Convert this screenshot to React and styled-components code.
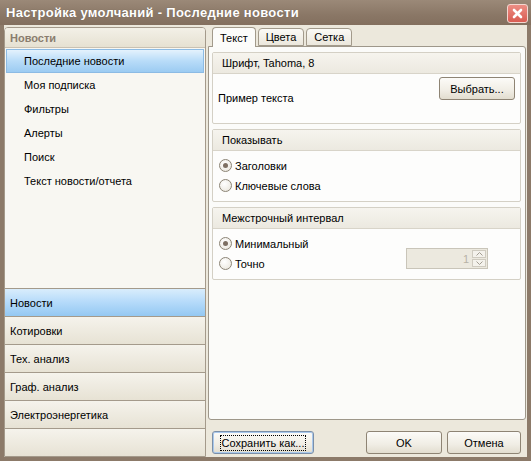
import React from "react"
import styled, { createGlobalStyle } from "styled-components"

const Global = createGlobalStyle`
    html, body {
        margin: 0;
        padding: 0;
        background: #ffffff;
    }
    * {
        box-sizing: border-box;
    }
`

const Window = styled.div`
    width: 531px;
    height: 461px;
    display: flex;
    flex-direction: column;
    font-family: "Liberation Sans", Arial, sans-serif;
    font-size: 11px;
    color: #000;
    background: #8c7a69;
`

const TitleBar = styled.div`
    height: 25px;
    display: flex;
    align-items: center;
    justify-content: space-between;
    padding: 0 3px 0 6px;
    background: linear-gradient(#9b8978, #8a7766 60%, #836f5e);
`

const Title = styled.div`
    color: #fff;
    font-weight: bold;
    font-size: 13px;
    letter-spacing: 0.3px;
    text-shadow: 0 0 1px rgba(0, 0, 0, 0.25);
`

const CloseButton = styled.div`
    width: 21px;
    height: 19px;
    border-radius: 3px;
    border: 1px solid #f3d7d0;
    background: linear-gradient(#ec8e84, #d95c52);
    display: flex;
    align-items: center;
    justify-content: center;
    margin-top: 1px;
`

const Body = styled.div`
    flex: 1;
    display: flex;
    gap: 2px;
    margin: 0 4px 4px 4px;
    padding-top: 2px;
    background: #ece8dc;
`

const LeftPanel = styled.div`
    width: 202px;
    display: flex;
    flex-direction: column;
    border: 1px solid #a49a8b;
    border-radius: 4px 4px 0 0;
    background: #f8f7f2;
    overflow: hidden;
`

const PanelHeader = styled.div`
    height: 20px;
    display: flex;
    align-items: center;
    padding-left: 5px;
    font-weight: bold;
    color: #8a7d6e;
    background: linear-gradient(#f3f0e7, #e6e1d2);
    border-bottom: 1px solid #c9c1b2;
`

const TreeList = styled.div`
    flex: 1;
    display: flex;
    flex-direction: column;
    padding: 1px 1px 0 1px;
`

const TreeItem = styled.div`
    height: 24px;
    display: flex;
    align-items: center;
    padding-left: 17px;
    border: 1px solid ${props => (props.$active ? "#8cbbe4" : "transparent")};
    background: ${props =>
        props.$active ? "linear-gradient(#e4f2fd, #b8dcf8 50%, #9ccbf2)" : "transparent"};
`

const NavButton = styled.div`
    height: 28px;
    display: flex;
    align-items: center;
    padding-left: 5px;
    border-top: 1px solid #a49a8b;
    background: ${props =>
        props.$active
            ? "linear-gradient(#d9edfc, #b4dafa 50%, #94c8f2)"
            : "linear-gradient(#f5f3ec, #e7e2d4)"};
`

const RightColumn = styled.div`
    flex: 1;
    display: flex;
    flex-direction: column;
    padding-right: 1px;
`

const TabStrip = styled.div`
    display: flex;
    gap: 2px;
    padding-left: 4px;
    height: 19px;
    align-items: flex-end;
    position: relative;
    z-index: 1;
`

const Tab = styled.div`
    height: ${props => (props.$active ? "20px" : "18px")};
    padding: 0 7px;
    display: flex;
    align-items: center;
    border: 1px solid #a29a8b;
    border-bottom: ${props => (props.$active ? "none" : "1px solid #a29a8b")};
    border-radius: 4px 4px 0 0;
    margin-bottom: ${props => (props.$active ? "-1px" : "0")};
    background: ${props =>
        props.$active ? "#fcfcfa" : "linear-gradient(#fbfaf6, #ebe7dc)"};
`

const TabPanel = styled.div`
    height: 374px;
    border: 1px solid #9e978a;
    border-radius: 0 3px 3px 3px;
    background: #fbfbf9;
    padding: 5px 4px 5px 3px;
    display: flex;
    flex-direction: column;
    gap: 5px;
`

const Group = styled.div`
    border: 1px solid #d4d0c5;
    border-radius: 2px;
    background: #fdfdfc;
    display: flex;
    flex-direction: column;
`

const GroupHeader = styled.div`
    height: 21px;
    display: flex;
    align-items: center;
    padding-left: 9px;
    background: linear-gradient(#f6f4ee, #ece9e0);
    border-bottom: 1px solid #d8d4c9;
`

const FontBody = styled.div`
    height: 49px;
    display: flex;
    align-items: flex-start;
    justify-content: space-between;
    padding: 2px 5px 0 5px;
`

const SampleText = styled.div`
    margin-top: 16px;
`

const RadioBody = styled.div`
    height: 50px;
    display: flex;
    flex-direction: column;
    gap: 7px;
    padding: 8px 0 0 6px;
`

const SpacingBody = styled.div`
    height: 50px;
    display: flex;
    align-items: flex-start;
    justify-content: space-between;
    padding: 8px 32px 0 6px;
`

const RadioColumn = styled.div`
    display: flex;
    flex-direction: column;
    gap: 7px;
`

const RadioRow = styled.label`
    display: flex;
    align-items: center;
    gap: 3px;
    height: 13px;
`

const RadioCircle = styled.span`
    width: 13px;
    height: 13px;
    border-radius: 50%;
    border: 1px solid #8b8475;
    background: radial-gradient(circle at 40% 35%, #ffffff, #e7e3d8);
    display: flex;
    align-items: center;
    justify-content: center;

    &::after {
        content: "";
        width: 5px;
        height: 5px;
        border-radius: 50%;
        background: ${props => (props.$checked ? "#7d6f62" : "transparent")};
    }
`

const SpinBox = styled.div`
    width: 82px;
    height: 21px;
    margin-top: 11px;
    display: flex;
    border: 1px solid #c9c5b9;
    background: #ece9df;
`

const SpinValue = styled.div`
    flex: 1;
    display: flex;
    align-items: center;
    justify-content: flex-end;
    padding-right: 3px;
    color: #b7b2a6;
`

const SpinArrows = styled.div`
    width: 15px;
    display: flex;
    flex-direction: column;
    padding: 1px 1px 1px 0;
    gap: 1px;
`

const SpinArrow = styled.div`
    flex: 1;
    border: 1px solid #cfcbc0;
    background: #f4f2ec;
    display: flex;
    align-items: center;
    justify-content: center;
`

const ButtonRow = styled.div`
    flex: 1;
    display: flex;
    align-items: flex-end;
    padding: 0 5px 3px 4px;
`

const Button = styled.div`
    width: ${props => props.$width}px;
    height: 23px;
    display: flex;
    align-items: center;
    justify-content: center;
    border: 1px solid ${props => (props.$focused ? "#7b8fa8" : "#8e8474")};
    border-radius: 3px;
    background: linear-gradient(#fcfbf8, #f0ede4 60%, #e2ddcf);
    box-shadow: ${props => (props.$focused ? "inset 0 0 0 1px #a9c8ec" : "none")};
    margin-left: ${props => props.$gap || 0}px;
`

const FocusText = styled.span`
    outline: 1px dotted #000;
    padding: 1px 1px;
`

const FontButton = styled(Button)`
    margin-top: 1px;
`

const CloseCross = () => (
    <svg width="11" height="11" viewBox="0 0 11 11">
        <path d="M2 2 L9 9 M9 2 L2 9" stroke="#fff" strokeWidth="2.6" strokeLinecap="round" />
    </svg>
)

const Arrow = ({ up }) => (
    <svg width="7" height="4" viewBox="0 0 7 4">
        <path d={up ? "M0.5 3.5 L3.5 0.5 L6.5 3.5" : "M0.5 0.5 L3.5 3.5 L6.5 0.5"} fill="none" stroke="#a29d92" strokeWidth="1" />
    </svg>
)

const treeItems = ["Последние новости", "Моя подписка", "Фильтры", "Алерты", "Поиск", "Текст новости/отчета"]
const navItems = ["Новости", "Котировки", "Тех. анализ", "Граф. анализ", "Электроэнергетика", ""]

const Radio = ({ checked, children }) => (
    <RadioRow>
        <RadioCircle $checked={checked} />
        {children}
    </RadioRow>
)

const App = () => {
    return (
        <Window>
            <Global />
            <TitleBar>
                <Title>Настройка умолчаний - Последние новости</Title>
                <CloseButton>
                    <CloseCross />
                </CloseButton>
            </TitleBar>
            <Body>
                <LeftPanel>
                    <PanelHeader>Новости</PanelHeader>
                    <TreeList>
                        {treeItems.map((item, i) => (
                            <TreeItem key={item} $active={i === 0}>{item}</TreeItem>
                        ))}
                    </TreeList>
                    {navItems.map((item, i) => (
                        <NavButton key={i} $active={i === 0}>{item}</NavButton>
                    ))}
                </LeftPanel>
                <RightColumn>
                    <TabStrip>
                        <Tab $active>Текст</Tab>
                        <Tab>Цвета</Tab>
                        <Tab>Сетка</Tab>
                    </TabStrip>
                    <TabPanel>
                        <Group>
                            <GroupHeader>Шрифт, Tahoma, 8</GroupHeader>
                            <FontBody>
                                <SampleText>Пример текста</SampleText>
                                <FontButton $width={76}>Выбрать...</FontButton>
                            </FontBody>
                        </Group>
                        <Group>
                            <GroupHeader>Показывать</GroupHeader>
                            <RadioBody>
                                <Radio checked>Заголовки</Radio>
                                <Radio>Ключевые слова</Radio>
                            </RadioBody>
                        </Group>
                        <Group>
                            <GroupHeader>Межстрочный интервал</GroupHeader>
                            <SpacingBody>
                                <RadioColumn>
                                    <Radio checked>Минимальный</Radio>
                                    <Radio>Точно</Radio>
                                </RadioColumn>
                                <SpinBox>
                                    <SpinValue>1</SpinValue>
                                    <SpinArrows>
                                        <SpinArrow><Arrow up /></SpinArrow>
                                        <SpinArrow><Arrow /></SpinArrow>
                                    </SpinArrows>
                                </SpinBox>
                            </SpacingBody>
                        </Group>
                    </TabPanel>
                    <ButtonRow>
                        <Button $width={102} $focused><FocusText>Сохранить как...</FocusText></Button>
                        <Button $width={76} $gap={52}>OK</Button>
                        <Button $width={74} $gap={5}>Отмена</Button>
                    </ButtonRow>
                </RightColumn>
            </Body>
        </Window>
    )
}

export default App
